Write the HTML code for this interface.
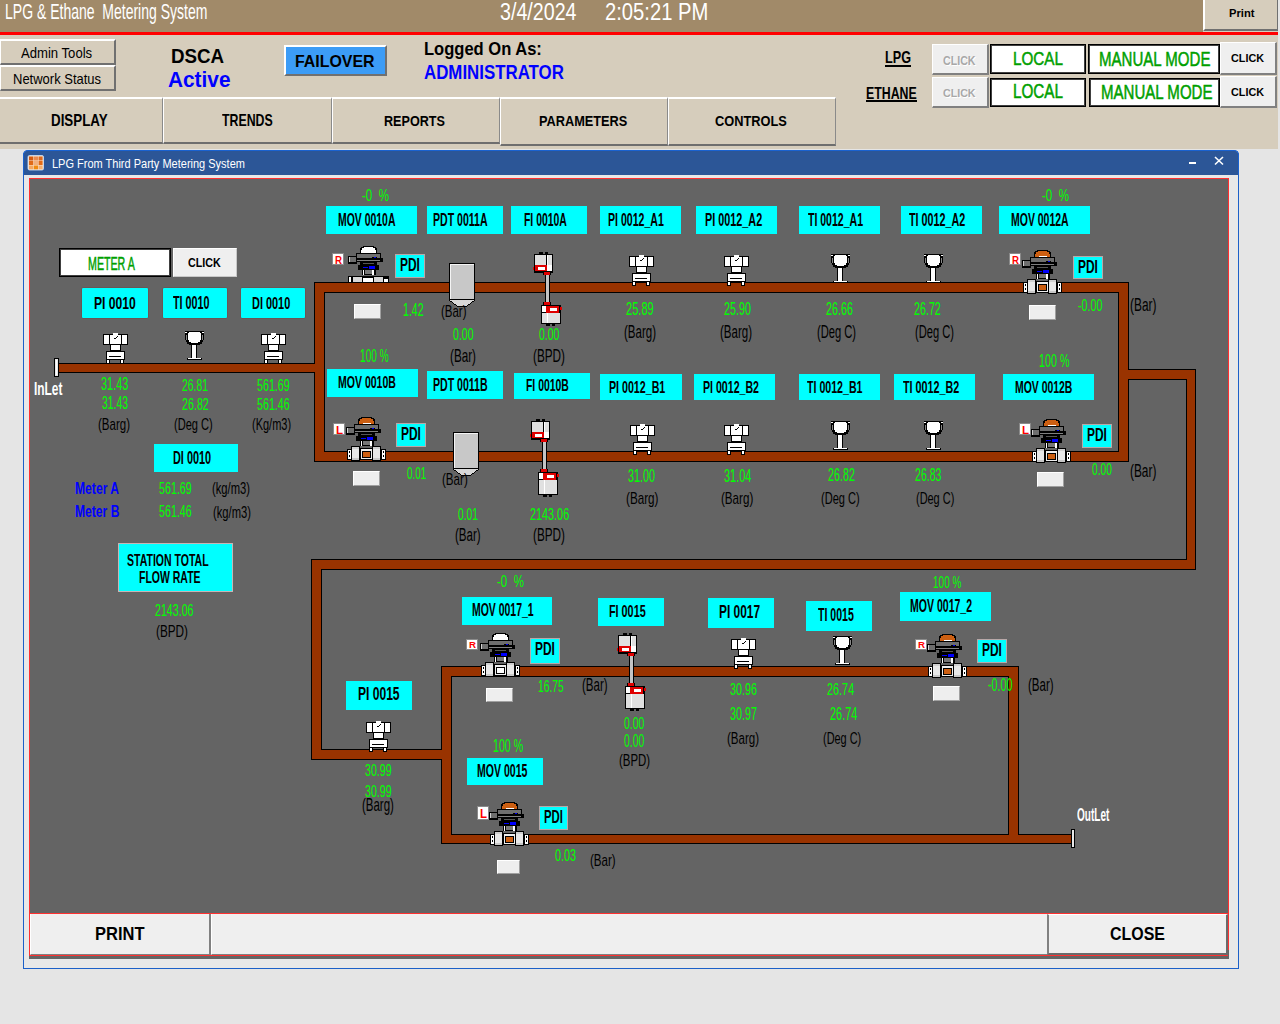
<!DOCTYPE html><html><head><meta charset="utf-8"><style>
html,body{margin:0;padding:0;}
body{width:1280px;height:1024px;position:relative;overflow:hidden;background:#e5e5e5;font-family:"Liberation Sans",sans-serif;}
.b{position:absolute;box-sizing:border-box;}
.t{position:absolute;white-space:pre;line-height:1;transform-origin:0 0;}
svg{position:absolute;left:0;top:0;}
</style></head><body>
<div class="b" style="left:0px;top:0px;width:1278px;height:149px;background:#d6cdbc"></div>
<div class="b" style="left:1278px;top:0px;width:2px;height:149px;background:#e5e5e5"></div>
<div class="b" style="left:0px;top:0px;width:1203px;height:32px;background:#a18a69"></div>
<div class="b" style="left:0px;top:32px;width:1278px;height:3px;background:#ff0000"></div>
<div class="b" style="left:1203px;top:0px;width:75px;height:31px;background:#d6cdbc;border-left:2px solid #fff;border-bottom:2px solid #707070;border-right:1px solid #707070"></div>
<div class="b" style="left:0px;top:39px;width:116px;height:26px;background:#d6cdbc;border-top:2px solid #fff;border-left:1px solid #fff;border-bottom:2px solid #707070;border-right:2px solid #707070"></div>
<div class="b" style="left:0px;top:65px;width:116px;height:26px;background:#d6cdbc;border-top:2px solid #fff;border-left:1px solid #fff;border-bottom:2px solid #707070;border-right:2px solid #707070"></div>
<div class="b" style="left:284px;top:45px;width:103px;height:31px;background:#3c9cf6;border-top:2px solid #fff;border-left:2px solid #fff;border-bottom:2px solid #707070;border-right:2px solid #707070"></div>
<div class="b" style="left:932px;top:44px;width:57px;height:31px;background:#efefef;border-top:1px solid #fff;border-left:1px solid #fff;border-bottom:2px solid #808080;border-right:2px solid #808080"></div>
<div class="b" style="left:932px;top:77px;width:57px;height:31px;background:#efefef;border-top:1px solid #fff;border-left:1px solid #fff;border-bottom:2px solid #808080;border-right:2px solid #808080"></div>
<div class="b" style="left:990px;top:44px;width:96px;height:30px;background:#fff;border:1px solid #000;box-shadow:inset 0 0 0 1px #404040"></div>
<div class="b" style="left:990px;top:78px;width:96px;height:29px;background:#fff;border:1px solid #000;box-shadow:inset 0 0 0 1px #404040"></div>
<div class="b" style="left:1088px;top:44px;width:132px;height:30px;background:#fff;border:1px solid #000;box-shadow:inset 0 0 0 1px #404040"></div>
<div class="b" style="left:1089px;top:78px;width:131px;height:29px;background:#fff;border:1px solid #000;box-shadow:inset 0 0 0 1px #404040"></div>
<div class="b" style="left:1220px;top:42px;width:57px;height:33px;background:#efefef;border-top:1px solid #fff;border-left:1px solid #fff;border-bottom:2px solid #808080;border-right:2px solid #808080"></div>
<div class="b" style="left:1220px;top:76px;width:57px;height:32px;background:#efefef;border-top:1px solid #fff;border-left:1px solid #fff;border-bottom:2px solid #808080;border-right:2px solid #808080"></div>
<div class="b" style="left:-1px;top:97px;width:164px;height:47px;background:#d6cdbc;border-top:2px solid #fff;border-left:1px solid #fff;border-bottom:2px solid #6e6e6e;border-right:1px solid #8a8a8a"></div>
<div class="b" style="left:163px;top:97px;width:169px;height:47px;background:#d6cdbc;border-top:2px solid #fff;border-left:1px solid #fff;border-bottom:2px solid #6e6e6e;border-right:1px solid #8a8a8a"></div>
<div class="b" style="left:332px;top:97px;width:168px;height:47px;background:#d6cdbc;border-top:2px solid #fff;border-left:1px solid #fff;border-bottom:2px solid #6e6e6e;border-right:1px solid #8a8a8a"></div>
<div class="b" style="left:500px;top:97px;width:168px;height:49px;background:#d6cdbc;border-top:2px solid #fff;border-left:1px solid #fff;border-bottom:2px solid #6e6e6e;border-right:1px solid #8a8a8a"></div>
<div class="b" style="left:668px;top:97px;width:168px;height:49px;background:#d6cdbc;border-top:2px solid #fff;border-left:1px solid #fff;border-bottom:2px solid #6e6e6e;border-right:1px solid #8a8a8a"></div>
<div class="b" style="left:23px;top:150px;width:1216px;height:819px;background:#e8e8e8;border:1px solid #1c60c8;border-top:none;border-radius:5px 5px 0 0;"></div>
<div class="b" style="left:23px;top:150px;width:1216px;height:25px;background:#2c5697;border-radius:5px 5px 0 0;border-top:1px solid #1a62d0;border-left:1px solid #1a62d0;border-right:1px solid #1a62d0"></div>
<div class="b" style="left:29px;top:178px;width:1200px;height:736px;background:#646464;border:1px solid #ff3030"></div>
<div class="b" style="left:29px;top:913px;width:1200px;height:43px;background:#efefef;border:1px solid #ff3030;border-top:1px solid #ff3030"></div>
<div class="b" style="left:29px;top:956px;width:1200px;height:3px;background:#646464"></div>
<div class="b" style="left:1228px;top:950px;width:1px;height:6px;background:#646464"></div>
<div class="b" style="left:30px;top:914px;width:181px;height:41px;background:#efefef;border-right:2px solid #808080;border-left:1px solid #fff;border-bottom:1px solid #808080"></div>
<div class="b" style="left:211px;top:914px;width:837px;height:41px;background:#efefef;border-left:1px solid #fff;border-bottom:1px solid #808080"></div>
<div class="b" style="left:1047px;top:914px;width:181px;height:41px;background:#efefef;border-left:2px solid #808080;border-right:2px solid #6a6a6a;border-bottom:2px solid #6a6a6a;border-top:1px solid #fff"></div>
<div class="b" style="left:59px;top:248px;width:112px;height:29px;background:#fff;border:1px solid #000;box-shadow:inset 0 0 0 1px #404040"></div>
<div class="b" style="left:173px;top:248px;width:64px;height:29px;background:#efefef;border-top:1px solid #fff;border-left:1px solid #fff;border-bottom:1px solid #c8c8c8;border-right:1px solid #c8c8c8"></div>
<div class="b" style="left:81px;top:287px;width:68px;height:32px;background:#00ffff;border:1px solid #6a5656;border-radius:2px"></div>
<div class="b" style="left:162px;top:287px;width:66px;height:32px;background:#00ffff;border:1px solid #6a5656;border-radius:2px"></div>
<div class="b" style="left:240px;top:287px;width:66px;height:32px;background:#00ffff;border:1px solid #6a5656;border-radius:2px"></div>
<div class="b" style="left:154px;top:444px;width:84px;height:28px;background:#00ffff"></div>
<div class="b" style="left:118px;top:543px;width:115px;height:49px;background:#00ffff;border:1px solid #c8b4b4"></div>
<div class="b" style="left:326px;top:206px;width:91px;height:28px;background:#00ffff"></div>
<div class="b" style="left:427px;top:206px;width:76px;height:28px;background:#00ffff"></div>
<div class="b" style="left:511px;top:206px;width:76px;height:28px;background:#00ffff"></div>
<div class="b" style="left:600px;top:206px;width:81px;height:28px;background:#00ffff"></div>
<div class="b" style="left:696px;top:206px;width:81px;height:28px;background:#00ffff"></div>
<div class="b" style="left:799px;top:206px;width:81px;height:28px;background:#00ffff"></div>
<div class="b" style="left:901px;top:206px;width:81px;height:28px;background:#00ffff"></div>
<div class="b" style="left:999px;top:206px;width:91px;height:28px;background:#00ffff"></div>
<div class="b" style="left:327px;top:369px;width:91px;height:28px;background:#00ffff"></div>
<div class="b" style="left:427px;top:371px;width:76px;height:28px;background:#00ffff"></div>
<div class="b" style="left:514px;top:373px;width:76px;height:26px;background:#00ffff"></div>
<div class="b" style="left:600px;top:374px;width:82px;height:26px;background:#00ffff"></div>
<div class="b" style="left:694px;top:374px;width:81px;height:26px;background:#00ffff"></div>
<div class="b" style="left:799px;top:374px;width:81px;height:26px;background:#00ffff"></div>
<div class="b" style="left:894px;top:374px;width:81px;height:26px;background:#00ffff"></div>
<div class="b" style="left:1003px;top:374px;width:91px;height:26px;background:#00ffff"></div>
<div class="b" style="left:462px;top:597px;width:90px;height:28px;background:#00ffff"></div>
<div class="b" style="left:598px;top:598px;width:66px;height:28px;background:#00ffff"></div>
<div class="b" style="left:708px;top:598px;width:66px;height:30px;background:#00ffff"></div>
<div class="b" style="left:806px;top:601px;width:66px;height:30px;background:#00ffff"></div>
<div class="b" style="left:900px;top:592px;width:91px;height:29px;background:#00ffff"></div>
<div class="b" style="left:346px;top:681px;width:66px;height:29px;background:#00ffff"></div>
<div class="b" style="left:467px;top:758px;width:76px;height:27px;background:#00ffff"></div>
<div class="b" style="left:395px;top:254px;width:30px;height:24px;background:#00ffff;border:1px solid #b8a8a8"></div>
<div class="b" style="left:396px;top:423px;width:30px;height:24px;background:#00ffff;border:1px solid #b8a8a8"></div>
<div class="b" style="left:1073px;top:256px;width:30px;height:23px;background:#00ffff;border:1px solid #b8a8a8"></div>
<div class="b" style="left:1082px;top:424px;width:30px;height:24px;background:#00ffff;border:1px solid #b8a8a8"></div>
<div class="b" style="left:530px;top:638px;width:30px;height:26px;background:#00ffff;border:1px solid #b8a8a8"></div>
<div class="b" style="left:977px;top:639px;width:30px;height:24px;background:#00ffff;border:1px solid #b8a8a8"></div>
<div class="b" style="left:539px;top:806px;width:29px;height:24px;background:#00ffff;border:1px solid #b8a8a8"></div>
<div class="b" style="left:354px;top:304px;width:27px;height:15px;background:#eeeeee;border-top:1px solid #fff;border-left:1px solid #fff;border-bottom:1px solid #a0a0a0;border-right:1px solid #a0a0a0"></div>
<div class="b" style="left:353px;top:471px;width:27px;height:15px;background:#eeeeee;border-top:1px solid #fff;border-left:1px solid #fff;border-bottom:1px solid #a0a0a0;border-right:1px solid #a0a0a0"></div>
<div class="b" style="left:1029px;top:305px;width:27px;height:15px;background:#eeeeee;border-top:1px solid #fff;border-left:1px solid #fff;border-bottom:1px solid #a0a0a0;border-right:1px solid #a0a0a0"></div>
<div class="b" style="left:1037px;top:472px;width:27px;height:15px;background:#eeeeee;border-top:1px solid #fff;border-left:1px solid #fff;border-bottom:1px solid #a0a0a0;border-right:1px solid #a0a0a0"></div>
<div class="b" style="left:486px;top:688px;width:27px;height:14px;background:#eeeeee;border-top:1px solid #fff;border-left:1px solid #fff;border-bottom:1px solid #a0a0a0;border-right:1px solid #a0a0a0"></div>
<div class="b" style="left:933px;top:686px;width:27px;height:15px;background:#eeeeee;border-top:1px solid #fff;border-left:1px solid #fff;border-bottom:1px solid #a0a0a0;border-right:1px solid #a0a0a0"></div>
<div class="b" style="left:497px;top:860px;width:23px;height:14px;background:#eeeeee;border-top:1px solid #fff;border-left:1px solid #fff;border-bottom:1px solid #a0a0a0;border-right:1px solid #a0a0a0"></div>
<div class="b" style="left:332px;top:253px;width:12px;height:12px;background:#fff;border:1px solid #8a8a8a"></div>
<div class="b" style="left:333px;top:423px;width:12px;height:12px;background:#fff;border:1px solid #8a8a8a"></div>
<div class="b" style="left:1009px;top:253px;width:12px;height:12px;background:#fff;border:1px solid #8a8a8a"></div>
<div class="b" style="left:1019px;top:423px;width:12px;height:12px;background:#fff;border:1px solid #8a8a8a"></div>
<div class="b" style="left:466px;top:639px;width:12px;height:11px;background:#fff;border:1px solid #8a8a8a"></div>
<div class="b" style="left:915px;top:639px;width:12px;height:11px;background:#fff;border:1px solid #8a8a8a"></div>
<div class="b" style="left:477px;top:806px;width:12px;height:14px;background:#fff;border:1px solid #8a8a8a"></div>
<svg width="1280" height="1024" viewBox="0 0 1280 1024" shape-rendering="crispEdges">
<rect x="363" y="246" width="11" height="1" fill="#000"/><rect x="361" y="247" width="15" height="1" fill="#000"/><rect x="360" y="248" width="17" height="6" fill="#000"/><rect x="364" y="247" width="9" height="1" fill="#ffffff"/><rect x="362" y="248" width="13" height="2" fill="#ffffff"/><rect x="361" y="250" width="15" height="3" fill="#ffffff"/><rect x="365" y="252" width="8" height="1" fill="#fff"/><rect x="348" y="256" width="9" height="8" fill="#000"/><rect x="350" y="257" width="6" height="5" fill="#6e6e6e"/><rect x="349" y="257" width="1" height="5" fill="#d0d0d0"/><rect x="356" y="253" width="25" height="9" fill="#000"/><rect x="357" y="254" width="23" height="4" fill="#6e6e6e"/><rect x="357" y="260" width="23" height="1" fill="#808080"/><rect x="372" y="257" width="5" height="2" fill="#000"/><rect x="374" y="257" width="2" height="1" fill="#0000ff"/><rect x="381" y="258" width="2" height="4" fill="#000"/><rect x="360" y="262" width="17" height="3" fill="#000"/><rect x="363" y="263" width="11" height="1" fill="#555"/><rect x="358" y="265" width="21" height="5" fill="#000"/><rect x="369" y="266" width="6" height="3" fill="#0000ff"/><rect x="363" y="267" width="5" height="1" fill="#0000ff"/><rect x="362" y="270" width="14" height="5" fill="#000"/><rect x="363" y="270" width="1" height="5" fill="#fff"/><rect x="372" y="270" width="2" height="5" fill="#fff"/><rect x="365" y="270" width="7" height="4" fill="#777"/>
<rect x="348" y="276" width="41" height="6" fill="#000"/><rect x="353" y="277" width="9" height="5" fill="#d8d8d8"/><rect x="374" y="277" width="9" height="5" fill="#d8d8d8"/><rect x="363" y="278" width="10" height="4" fill="#fff"/><rect x="349" y="277" width="2" height="5" fill="#fff"/><rect x="384" y="279" width="4" height="3" fill="#fff"/>
<rect x="314" y="282" width="815" height="11" fill="#000"/>
<rect x="314" y="282" width="11" height="180" fill="#000"/>
<rect x="314" y="451" width="815" height="11" fill="#000"/>
<rect x="1118" y="282" width="11" height="180" fill="#000"/>
<rect x="55" y="363" width="270" height="10" fill="#000"/>
<rect x="1118" y="369" width="78" height="11" fill="#000"/>
<rect x="1186" y="369" width="10" height="201" fill="#000"/>
<rect x="311" y="559" width="885" height="11" fill="#000"/>
<rect x="311" y="559" width="11" height="201" fill="#000"/>
<rect x="311" y="749" width="141" height="11" fill="#000"/>
<rect x="441" y="666" width="11" height="178" fill="#000"/>
<rect x="441" y="666" width="578" height="11" fill="#000"/>
<rect x="1008" y="666" width="11" height="178" fill="#000"/>
<rect x="441" y="834" width="631" height="10" fill="#000"/>
<rect x="315" y="283" width="813" height="9" fill="#993300"/>
<rect x="315" y="283" width="9" height="178" fill="#993300"/>
<rect x="315" y="452" width="813" height="9" fill="#993300"/>
<rect x="1119" y="283" width="9" height="178" fill="#993300"/>
<rect x="56" y="364" width="268" height="8" fill="#993300"/>
<rect x="1119" y="370" width="76" height="9" fill="#993300"/>
<rect x="1187" y="370" width="8" height="199" fill="#993300"/>
<rect x="312" y="560" width="883" height="9" fill="#993300"/>
<rect x="312" y="560" width="9" height="199" fill="#993300"/>
<rect x="312" y="750" width="139" height="9" fill="#993300"/>
<rect x="442" y="667" width="9" height="176" fill="#993300"/>
<rect x="442" y="667" width="576" height="9" fill="#993300"/>
<rect x="1009" y="667" width="9" height="176" fill="#993300"/>
<rect x="442" y="835" width="629" height="8" fill="#993300"/>
<rect x="54" y="358" width="5" height="19" fill="#000"/><rect x="55" y="359" width="3" height="17" fill="#e8e8e8"/><rect x="56" y="360" width="1" height="15" fill="#fff"/>
<rect x="1071" y="829" width="4" height="19" fill="#000"/><rect x="1072" y="830" width="2" height="17" fill="#e8e8e8"/>
<rect x="103" y="334" width="25" height="11" fill="#000"/><rect x="104" y="335" width="5" height="9" fill="#fff"/><rect x="110" y="335" width="11" height="9" fill="#fff"/><rect x="122" y="335" width="5" height="9" fill="#fff"/><rect x="113" y="333" width="5" height="2" fill="#fff"/><rect x="114" y="338" width="2" height="1" fill="#000"/><rect x="116" y="337" width="1" height="1" fill="#000"/><rect x="117" y="336" width="1" height="1" fill="#000"/><rect x="110" y="345" width="11" height="6" fill="#000"/><rect x="111" y="345" width="9" height="5" fill="#fff"/><rect x="106" y="351" width="19" height="9" fill="#000"/><rect x="107" y="352" width="17" height="7" fill="#fff"/><rect x="109" y="356" width="12" height="1" fill="#000"/><rect x="106" y="360" width="4" height="4" fill="#000"/><rect x="107" y="360" width="2" height="3" fill="#fff"/><rect x="120" y="360" width="4" height="4" fill="#000"/><rect x="121" y="360" width="2" height="3" fill="#fff"/>
<rect x="261" y="334" width="25" height="11" fill="#000"/><rect x="262" y="335" width="5" height="9" fill="#fff"/><rect x="268" y="335" width="11" height="9" fill="#fff"/><rect x="280" y="335" width="5" height="9" fill="#fff"/><rect x="271" y="333" width="5" height="2" fill="#fff"/><rect x="272" y="338" width="2" height="1" fill="#000"/><rect x="274" y="337" width="1" height="1" fill="#000"/><rect x="275" y="336" width="1" height="1" fill="#000"/><rect x="268" y="345" width="11" height="6" fill="#000"/><rect x="269" y="345" width="9" height="5" fill="#fff"/><rect x="264" y="351" width="19" height="9" fill="#000"/><rect x="265" y="352" width="17" height="7" fill="#fff"/><rect x="267" y="356" width="12" height="1" fill="#000"/><rect x="264" y="360" width="4" height="4" fill="#000"/><rect x="265" y="360" width="2" height="3" fill="#fff"/><rect x="278" y="360" width="4" height="4" fill="#000"/><rect x="279" y="360" width="2" height="3" fill="#fff"/>
<rect x="629" y="256" width="25" height="11" fill="#000"/><rect x="630" y="257" width="5" height="9" fill="#fff"/><rect x="636" y="257" width="11" height="9" fill="#fff"/><rect x="648" y="257" width="5" height="9" fill="#fff"/><rect x="639" y="255" width="5" height="2" fill="#fff"/><rect x="640" y="260" width="2" height="1" fill="#000"/><rect x="642" y="259" width="1" height="1" fill="#000"/><rect x="643" y="258" width="1" height="1" fill="#000"/><rect x="636" y="267" width="11" height="6" fill="#000"/><rect x="637" y="267" width="9" height="5" fill="#fff"/><rect x="632" y="273" width="19" height="9" fill="#000"/><rect x="633" y="274" width="17" height="7" fill="#fff"/><rect x="635" y="278" width="12" height="1" fill="#000"/><rect x="632" y="282" width="4" height="4" fill="#000"/><rect x="633" y="282" width="2" height="3" fill="#fff"/><rect x="646" y="282" width="4" height="4" fill="#000"/><rect x="647" y="282" width="2" height="3" fill="#fff"/>
<rect x="724" y="256" width="25" height="11" fill="#000"/><rect x="725" y="257" width="5" height="9" fill="#fff"/><rect x="731" y="257" width="11" height="9" fill="#fff"/><rect x="743" y="257" width="5" height="9" fill="#fff"/><rect x="734" y="255" width="5" height="2" fill="#fff"/><rect x="735" y="260" width="2" height="1" fill="#000"/><rect x="737" y="259" width="1" height="1" fill="#000"/><rect x="738" y="258" width="1" height="1" fill="#000"/><rect x="731" y="267" width="11" height="6" fill="#000"/><rect x="732" y="267" width="9" height="5" fill="#fff"/><rect x="727" y="273" width="19" height="9" fill="#000"/><rect x="728" y="274" width="17" height="7" fill="#fff"/><rect x="730" y="278" width="12" height="1" fill="#000"/><rect x="727" y="282" width="4" height="4" fill="#000"/><rect x="728" y="282" width="2" height="3" fill="#fff"/><rect x="741" y="282" width="4" height="4" fill="#000"/><rect x="742" y="282" width="2" height="3" fill="#fff"/>
<rect x="630" y="425" width="25" height="11" fill="#000"/><rect x="631" y="426" width="5" height="9" fill="#fff"/><rect x="637" y="426" width="11" height="9" fill="#fff"/><rect x="649" y="426" width="5" height="9" fill="#fff"/><rect x="640" y="424" width="5" height="2" fill="#fff"/><rect x="641" y="429" width="2" height="1" fill="#000"/><rect x="643" y="428" width="1" height="1" fill="#000"/><rect x="644" y="427" width="1" height="1" fill="#000"/><rect x="637" y="436" width="11" height="6" fill="#000"/><rect x="638" y="436" width="9" height="5" fill="#fff"/><rect x="633" y="442" width="19" height="9" fill="#000"/><rect x="634" y="443" width="17" height="7" fill="#fff"/><rect x="636" y="447" width="12" height="1" fill="#000"/><rect x="633" y="451" width="4" height="4" fill="#000"/><rect x="634" y="451" width="2" height="3" fill="#fff"/><rect x="647" y="451" width="4" height="4" fill="#000"/><rect x="648" y="451" width="2" height="3" fill="#fff"/>
<rect x="724" y="425" width="25" height="11" fill="#000"/><rect x="725" y="426" width="5" height="9" fill="#fff"/><rect x="731" y="426" width="11" height="9" fill="#fff"/><rect x="743" y="426" width="5" height="9" fill="#fff"/><rect x="734" y="424" width="5" height="2" fill="#fff"/><rect x="735" y="429" width="2" height="1" fill="#000"/><rect x="737" y="428" width="1" height="1" fill="#000"/><rect x="738" y="427" width="1" height="1" fill="#000"/><rect x="731" y="436" width="11" height="6" fill="#000"/><rect x="732" y="436" width="9" height="5" fill="#fff"/><rect x="727" y="442" width="19" height="9" fill="#000"/><rect x="728" y="443" width="17" height="7" fill="#fff"/><rect x="730" y="447" width="12" height="1" fill="#000"/><rect x="727" y="451" width="4" height="4" fill="#000"/><rect x="728" y="451" width="2" height="3" fill="#fff"/><rect x="741" y="451" width="4" height="4" fill="#000"/><rect x="742" y="451" width="2" height="3" fill="#fff"/>
<rect x="731" y="639" width="25" height="11" fill="#000"/><rect x="732" y="640" width="5" height="9" fill="#fff"/><rect x="738" y="640" width="11" height="9" fill="#fff"/><rect x="750" y="640" width="5" height="9" fill="#fff"/><rect x="741" y="638" width="5" height="2" fill="#fff"/><rect x="742" y="643" width="2" height="1" fill="#000"/><rect x="744" y="642" width="1" height="1" fill="#000"/><rect x="745" y="641" width="1" height="1" fill="#000"/><rect x="738" y="650" width="11" height="6" fill="#000"/><rect x="739" y="650" width="9" height="5" fill="#fff"/><rect x="734" y="656" width="19" height="9" fill="#000"/><rect x="735" y="657" width="17" height="7" fill="#fff"/><rect x="737" y="661" width="12" height="1" fill="#000"/><rect x="734" y="665" width="4" height="4" fill="#000"/><rect x="735" y="665" width="2" height="3" fill="#fff"/><rect x="748" y="665" width="4" height="4" fill="#000"/><rect x="749" y="665" width="2" height="3" fill="#fff"/>
<rect x="366" y="722" width="25" height="11" fill="#000"/><rect x="367" y="723" width="5" height="9" fill="#fff"/><rect x="373" y="723" width="11" height="9" fill="#fff"/><rect x="385" y="723" width="5" height="9" fill="#fff"/><rect x="376" y="721" width="5" height="2" fill="#fff"/><rect x="377" y="726" width="2" height="1" fill="#000"/><rect x="379" y="725" width="1" height="1" fill="#000"/><rect x="380" y="724" width="1" height="1" fill="#000"/><rect x="373" y="733" width="11" height="6" fill="#000"/><rect x="374" y="733" width="9" height="5" fill="#fff"/><rect x="369" y="739" width="19" height="9" fill="#000"/><rect x="370" y="740" width="17" height="7" fill="#fff"/><rect x="372" y="744" width="12" height="1" fill="#000"/><rect x="369" y="748" width="4" height="4" fill="#000"/><rect x="370" y="748" width="2" height="3" fill="#fff"/><rect x="383" y="748" width="4" height="4" fill="#000"/><rect x="384" y="748" width="2" height="3" fill="#fff"/>
<rect x="185" y="331" width="19" height="9" fill="#000"/><rect x="186" y="340" width="17" height="2" fill="#000"/><rect x="187" y="342" width="15" height="2" fill="#000"/><rect x="189" y="344" width="11" height="1" fill="#000"/><rect x="188" y="333" width="13" height="7" fill="#fff"/><rect x="189" y="332" width="11" height="1" fill="#fff"/><rect x="189" y="340" width="11" height="2" fill="#fff"/><rect x="191" y="342" width="7" height="1" fill="#fff"/><rect x="185" y="332" width="2" height="1" fill="#fff"/><rect x="202" y="332" width="2" height="1" fill="#fff"/><rect x="186" y="335" width="1" height="5" fill="#888"/><rect x="202" y="335" width="1" height="5" fill="#888"/><rect x="191" y="345" width="6" height="14" fill="#000"/><rect x="192" y="345" width="4" height="13" fill="#fff"/><rect x="187" y="358" width="15" height="2" fill="#000"/><rect x="188" y="358" width="13" height="1" fill="#fff"/>
<rect x="831" y="254" width="19" height="9" fill="#000"/><rect x="832" y="263" width="17" height="2" fill="#000"/><rect x="833" y="265" width="15" height="2" fill="#000"/><rect x="835" y="267" width="11" height="1" fill="#000"/><rect x="834" y="256" width="13" height="7" fill="#fff"/><rect x="835" y="255" width="11" height="1" fill="#fff"/><rect x="835" y="263" width="11" height="2" fill="#fff"/><rect x="837" y="265" width="7" height="1" fill="#fff"/><rect x="831" y="255" width="2" height="1" fill="#fff"/><rect x="848" y="255" width="2" height="1" fill="#fff"/><rect x="832" y="258" width="1" height="5" fill="#888"/><rect x="848" y="258" width="1" height="5" fill="#888"/><rect x="837" y="268" width="6" height="14" fill="#000"/><rect x="838" y="268" width="4" height="13" fill="#fff"/><rect x="833" y="281" width="15" height="2" fill="#000"/><rect x="834" y="281" width="13" height="1" fill="#fff"/>
<rect x="924" y="254" width="19" height="9" fill="#000"/><rect x="925" y="263" width="17" height="2" fill="#000"/><rect x="926" y="265" width="15" height="2" fill="#000"/><rect x="928" y="267" width="11" height="1" fill="#000"/><rect x="927" y="256" width="13" height="7" fill="#fff"/><rect x="928" y="255" width="11" height="1" fill="#fff"/><rect x="928" y="263" width="11" height="2" fill="#fff"/><rect x="930" y="265" width="7" height="1" fill="#fff"/><rect x="924" y="255" width="2" height="1" fill="#fff"/><rect x="941" y="255" width="2" height="1" fill="#fff"/><rect x="925" y="258" width="1" height="5" fill="#888"/><rect x="941" y="258" width="1" height="5" fill="#888"/><rect x="930" y="268" width="6" height="14" fill="#000"/><rect x="931" y="268" width="4" height="13" fill="#fff"/><rect x="926" y="281" width="15" height="2" fill="#000"/><rect x="927" y="281" width="13" height="1" fill="#fff"/>
<rect x="831" y="421" width="19" height="9" fill="#000"/><rect x="832" y="430" width="17" height="2" fill="#000"/><rect x="833" y="432" width="15" height="2" fill="#000"/><rect x="835" y="434" width="11" height="1" fill="#000"/><rect x="834" y="423" width="13" height="7" fill="#fff"/><rect x="835" y="422" width="11" height="1" fill="#fff"/><rect x="835" y="430" width="11" height="2" fill="#fff"/><rect x="837" y="432" width="7" height="1" fill="#fff"/><rect x="831" y="422" width="2" height="1" fill="#fff"/><rect x="848" y="422" width="2" height="1" fill="#fff"/><rect x="832" y="425" width="1" height="5" fill="#888"/><rect x="848" y="425" width="1" height="5" fill="#888"/><rect x="837" y="435" width="6" height="14" fill="#000"/><rect x="838" y="435" width="4" height="13" fill="#fff"/><rect x="833" y="448" width="15" height="2" fill="#000"/><rect x="834" y="448" width="13" height="1" fill="#fff"/>
<rect x="924" y="421" width="19" height="9" fill="#000"/><rect x="925" y="430" width="17" height="2" fill="#000"/><rect x="926" y="432" width="15" height="2" fill="#000"/><rect x="928" y="434" width="11" height="1" fill="#000"/><rect x="927" y="423" width="13" height="7" fill="#fff"/><rect x="928" y="422" width="11" height="1" fill="#fff"/><rect x="928" y="430" width="11" height="2" fill="#fff"/><rect x="930" y="432" width="7" height="1" fill="#fff"/><rect x="924" y="422" width="2" height="1" fill="#fff"/><rect x="941" y="422" width="2" height="1" fill="#fff"/><rect x="925" y="425" width="1" height="5" fill="#888"/><rect x="941" y="425" width="1" height="5" fill="#888"/><rect x="930" y="435" width="6" height="14" fill="#000"/><rect x="931" y="435" width="4" height="13" fill="#fff"/><rect x="926" y="448" width="15" height="2" fill="#000"/><rect x="927" y="448" width="13" height="1" fill="#fff"/>
<rect x="833" y="636" width="19" height="9" fill="#000"/><rect x="834" y="645" width="17" height="2" fill="#000"/><rect x="835" y="647" width="15" height="2" fill="#000"/><rect x="837" y="649" width="11" height="1" fill="#000"/><rect x="836" y="638" width="13" height="7" fill="#fff"/><rect x="837" y="637" width="11" height="1" fill="#fff"/><rect x="837" y="645" width="11" height="2" fill="#fff"/><rect x="839" y="647" width="7" height="1" fill="#fff"/><rect x="833" y="637" width="2" height="1" fill="#fff"/><rect x="850" y="637" width="2" height="1" fill="#fff"/><rect x="834" y="640" width="1" height="5" fill="#888"/><rect x="850" y="640" width="1" height="5" fill="#888"/><rect x="839" y="650" width="6" height="14" fill="#000"/><rect x="840" y="650" width="4" height="13" fill="#fff"/><rect x="835" y="663" width="15" height="2" fill="#000"/><rect x="836" y="663" width="13" height="1" fill="#fff"/>
<rect x="539" y="252" width="4" height="2" fill="#000"/><rect x="545" y="252" width="3" height="2" fill="#000"/><rect x="534" y="254" width="19" height="19" fill="#000"/><rect x="535" y="255" width="17" height="10" fill="#e0e0e0"/><rect x="546" y="255" width="1" height="10" fill="#000"/><rect x="547" y="255" width="1" height="10" fill="#fff"/><rect x="535" y="265" width="12" height="6" fill="#e00000"/><rect x="538" y="267" width="7" height="3" fill="#fff"/><rect x="547" y="265" width="5" height="6" fill="#fff"/><rect x="533" y="267" width="1" height="3" fill="#e00000"/><rect x="543" y="272" width="8" height="3" fill="#000"/><rect x="544" y="272" width="6" height="3" fill="#e00000"/><rect x="545" y="275" width="5" height="28" fill="#000"/><rect x="546" y="275" width="3" height="28" fill="#c4c4c4"/><rect x="543" y="302" width="8" height="3" fill="#000"/><rect x="544" y="302" width="6" height="3" fill="#e00000"/><rect x="541" y="305" width="20" height="19" fill="#000"/><rect x="542" y="306" width="4" height="6" fill="#fff"/><rect x="546" y="306" width="13" height="7" fill="#e00000"/><rect x="550" y="308" width="7" height="3" fill="#fff"/><rect x="560" y="307" width="2" height="3" fill="#e00000"/><rect x="542" y="313" width="18" height="10" fill="#e0e0e0"/><rect x="547" y="313" width="1" height="10" fill="#fff"/><rect x="546" y="324" width="4" height="2" fill="#000"/><rect x="552" y="324" width="3" height="2" fill="#000"/>
<rect x="536" y="419" width="4" height="2" fill="#000"/><rect x="542" y="419" width="3" height="2" fill="#000"/><rect x="531" y="421" width="19" height="19" fill="#000"/><rect x="532" y="422" width="17" height="10" fill="#e0e0e0"/><rect x="543" y="422" width="1" height="10" fill="#000"/><rect x="544" y="422" width="1" height="10" fill="#fff"/><rect x="532" y="432" width="12" height="6" fill="#e00000"/><rect x="535" y="434" width="7" height="3" fill="#fff"/><rect x="544" y="432" width="5" height="6" fill="#fff"/><rect x="530" y="434" width="1" height="3" fill="#e00000"/><rect x="540" y="439" width="8" height="3" fill="#000"/><rect x="541" y="439" width="6" height="3" fill="#e00000"/><rect x="542" y="442" width="5" height="28" fill="#000"/><rect x="543" y="442" width="3" height="28" fill="#c4c4c4"/><rect x="540" y="469" width="8" height="3" fill="#000"/><rect x="541" y="469" width="6" height="3" fill="#e00000"/><rect x="538" y="472" width="20" height="23" fill="#000"/><rect x="539" y="473" width="4" height="6" fill="#fff"/><rect x="543" y="473" width="13" height="7" fill="#e00000"/><rect x="547" y="475" width="7" height="3" fill="#fff"/><rect x="557" y="474" width="2" height="3" fill="#e00000"/><rect x="539" y="480" width="18" height="14" fill="#e0e0e0"/><rect x="544" y="480" width="1" height="14" fill="#fff"/><rect x="543" y="495" width="4" height="2" fill="#000"/><rect x="549" y="495" width="3" height="2" fill="#000"/>
<rect x="623" y="633" width="4" height="2" fill="#000"/><rect x="629" y="633" width="3" height="2" fill="#000"/><rect x="618" y="635" width="19" height="19" fill="#000"/><rect x="619" y="636" width="17" height="10" fill="#e0e0e0"/><rect x="630" y="636" width="1" height="10" fill="#000"/><rect x="631" y="636" width="1" height="10" fill="#fff"/><rect x="619" y="646" width="12" height="6" fill="#e00000"/><rect x="622" y="648" width="7" height="3" fill="#fff"/><rect x="631" y="646" width="5" height="6" fill="#fff"/><rect x="617" y="648" width="1" height="3" fill="#e00000"/><rect x="627" y="653" width="8" height="3" fill="#000"/><rect x="628" y="653" width="6" height="3" fill="#e00000"/><rect x="629" y="656" width="5" height="28" fill="#000"/><rect x="630" y="656" width="3" height="28" fill="#c4c4c4"/><rect x="627" y="683" width="8" height="3" fill="#000"/><rect x="628" y="683" width="6" height="3" fill="#e00000"/><rect x="625" y="686" width="20" height="23" fill="#000"/><rect x="626" y="687" width="4" height="6" fill="#fff"/><rect x="630" y="687" width="13" height="7" fill="#e00000"/><rect x="634" y="689" width="7" height="3" fill="#fff"/><rect x="644" y="688" width="2" height="3" fill="#e00000"/><rect x="626" y="694" width="18" height="14" fill="#e0e0e0"/><rect x="631" y="694" width="1" height="14" fill="#fff"/><rect x="630" y="709" width="4" height="2" fill="#000"/><rect x="636" y="709" width="3" height="2" fill="#000"/>
<rect x="449" y="263" width="26" height="37" fill="#000"/><rect x="450" y="264" width="24" height="35" fill="#c8c8c8"/><rect x="450" y="264" width="24" height="1" fill="#f4f4f4"/><rect x="450" y="264" width="1" height="35" fill="#f4f4f4"/><rect x="449" y="300" width="26" height="1" fill="#000"/><rect x="450" y="300" width="24" height="1" fill="#d8d8d8"/><rect x="450" y="301" width="24" height="1" fill="#000"/><rect x="452" y="301" width="20" height="1" fill="#d8d8d8"/><rect x="452" y="302" width="20" height="1" fill="#000"/><rect x="453" y="302" width="18" height="1" fill="#d8d8d8"/><rect x="453" y="303" width="18" height="1" fill="#000"/><rect x="454" y="303" width="16" height="1" fill="#d8d8d8"/><rect x="454" y="304" width="16" height="1" fill="#000"/><rect x="456" y="304" width="12" height="1" fill="#d8d8d8"/><rect x="456" y="305" width="12" height="1" fill="#000"/><rect x="457" y="305" width="10" height="1" fill="#d8d8d8"/><rect x="457" y="306" width="10" height="1" fill="#000"/>
<rect x="453" y="432" width="26" height="37" fill="#000"/><rect x="454" y="433" width="24" height="35" fill="#c8c8c8"/><rect x="454" y="433" width="24" height="1" fill="#f4f4f4"/><rect x="454" y="433" width="1" height="35" fill="#f4f4f4"/><rect x="453" y="469" width="26" height="1" fill="#000"/><rect x="454" y="469" width="24" height="1" fill="#d8d8d8"/><rect x="454" y="470" width="24" height="1" fill="#000"/><rect x="456" y="470" width="20" height="1" fill="#d8d8d8"/><rect x="456" y="471" width="20" height="1" fill="#000"/><rect x="457" y="471" width="18" height="1" fill="#d8d8d8"/><rect x="457" y="472" width="18" height="1" fill="#000"/><rect x="458" y="472" width="16" height="1" fill="#d8d8d8"/><rect x="458" y="473" width="16" height="1" fill="#000"/><rect x="460" y="473" width="12" height="1" fill="#d8d8d8"/><rect x="460" y="474" width="12" height="1" fill="#000"/><rect x="461" y="474" width="10" height="1" fill="#d8d8d8"/><rect x="461" y="475" width="10" height="1" fill="#000"/>
<rect x="347" y="449" width="5" height="11" fill="#000"/><rect x="348" y="450" width="3" height="9" fill="#fff"/><rect x="349" y="451" width="1" height="2" fill="#000"/><rect x="349" y="455" width="1" height="2" fill="#000"/><rect x="381" y="449" width="5" height="11" fill="#000"/><rect x="382" y="450" width="3" height="9" fill="#fff"/><rect x="383" y="451" width="1" height="2" fill="#000"/><rect x="383" y="455" width="1" height="2" fill="#000"/><rect x="360" y="448" width="13" height="12" fill="#000"/><rect x="361" y="449" width="11" height="10" fill="#efefef"/><rect x="351" y="446" width="9" height="15" fill="#000"/><rect x="352" y="447" width="7" height="13" fill="#e8e8e8"/><rect x="352" y="447" width="7" height="2" fill="#d0d0d0"/><rect x="352" y="458" width="7" height="2" fill="#c8c8c8"/><rect x="372" y="446" width="9" height="15" fill="#000"/><rect x="373" y="447" width="7" height="13" fill="#e8e8e8"/><rect x="373" y="447" width="7" height="2" fill="#d0d0d0"/><rect x="373" y="458" width="7" height="2" fill="#c8c8c8"/><rect x="362" y="451" width="9" height="7" fill="#000"/><rect x="363" y="452" width="7" height="5" fill="#cc5f12"/>
<rect x="361" y="417" width="11" height="1" fill="#000"/><rect x="359" y="418" width="15" height="1" fill="#000"/><rect x="358" y="419" width="17" height="6" fill="#000"/><rect x="362" y="418" width="9" height="1" fill="#cc5f12"/><rect x="360" y="419" width="13" height="2" fill="#cc5f12"/><rect x="359" y="421" width="15" height="3" fill="#cc5f12"/><rect x="363" y="423" width="8" height="1" fill="#fff"/><rect x="346" y="427" width="9" height="8" fill="#000"/><rect x="348" y="428" width="6" height="5" fill="#6e6e6e"/><rect x="347" y="428" width="1" height="5" fill="#d0d0d0"/><rect x="354" y="424" width="25" height="9" fill="#000"/><rect x="355" y="425" width="23" height="4" fill="#6e6e6e"/><rect x="355" y="431" width="23" height="1" fill="#808080"/><rect x="370" y="428" width="5" height="2" fill="#000"/><rect x="372" y="428" width="2" height="1" fill="#0000ff"/><rect x="379" y="429" width="2" height="4" fill="#000"/><rect x="358" y="433" width="17" height="3" fill="#000"/><rect x="361" y="434" width="11" height="1" fill="#555"/><rect x="356" y="436" width="21" height="5" fill="#000"/><rect x="367" y="437" width="6" height="3" fill="#0000ff"/><rect x="361" y="438" width="5" height="1" fill="#0000ff"/><rect x="360" y="441" width="14" height="5" fill="#000"/><rect x="361" y="441" width="1" height="5" fill="#fff"/><rect x="370" y="441" width="2" height="5" fill="#fff"/><rect x="363" y="441" width="7" height="4" fill="#777"/>
<rect x="1023" y="282" width="5" height="11" fill="#000"/><rect x="1024" y="283" width="3" height="9" fill="#fff"/><rect x="1025" y="284" width="1" height="2" fill="#000"/><rect x="1025" y="288" width="1" height="2" fill="#000"/><rect x="1057" y="282" width="5" height="11" fill="#000"/><rect x="1058" y="283" width="3" height="9" fill="#fff"/><rect x="1059" y="284" width="1" height="2" fill="#000"/><rect x="1059" y="288" width="1" height="2" fill="#000"/><rect x="1036" y="281" width="13" height="12" fill="#000"/><rect x="1037" y="282" width="11" height="10" fill="#efefef"/><rect x="1027" y="279" width="9" height="15" fill="#000"/><rect x="1028" y="280" width="7" height="13" fill="#e8e8e8"/><rect x="1028" y="280" width="7" height="2" fill="#d0d0d0"/><rect x="1028" y="291" width="7" height="2" fill="#c8c8c8"/><rect x="1048" y="279" width="9" height="15" fill="#000"/><rect x="1049" y="280" width="7" height="13" fill="#e8e8e8"/><rect x="1049" y="280" width="7" height="2" fill="#d0d0d0"/><rect x="1049" y="291" width="7" height="2" fill="#c8c8c8"/><rect x="1038" y="284" width="9" height="7" fill="#000"/><rect x="1039" y="285" width="7" height="5" fill="#cc5f12"/>
<rect x="1037" y="250" width="11" height="1" fill="#000"/><rect x="1035" y="251" width="15" height="1" fill="#000"/><rect x="1034" y="252" width="17" height="6" fill="#000"/><rect x="1038" y="251" width="9" height="1" fill="#cc5f12"/><rect x="1036" y="252" width="13" height="2" fill="#cc5f12"/><rect x="1035" y="254" width="15" height="3" fill="#cc5f12"/><rect x="1039" y="256" width="8" height="1" fill="#fff"/><rect x="1022" y="260" width="9" height="8" fill="#000"/><rect x="1024" y="261" width="6" height="5" fill="#6e6e6e"/><rect x="1023" y="261" width="1" height="5" fill="#d0d0d0"/><rect x="1030" y="257" width="25" height="9" fill="#000"/><rect x="1031" y="258" width="23" height="4" fill="#6e6e6e"/><rect x="1031" y="264" width="23" height="1" fill="#808080"/><rect x="1046" y="261" width="5" height="2" fill="#000"/><rect x="1048" y="261" width="2" height="1" fill="#0000ff"/><rect x="1055" y="262" width="2" height="4" fill="#000"/><rect x="1034" y="266" width="17" height="3" fill="#000"/><rect x="1037" y="267" width="11" height="1" fill="#555"/><rect x="1032" y="269" width="21" height="5" fill="#000"/><rect x="1043" y="270" width="6" height="3" fill="#0000ff"/><rect x="1037" y="271" width="5" height="1" fill="#0000ff"/><rect x="1036" y="274" width="14" height="5" fill="#000"/><rect x="1037" y="274" width="1" height="5" fill="#fff"/><rect x="1046" y="274" width="2" height="5" fill="#fff"/><rect x="1039" y="274" width="7" height="4" fill="#777"/>
<rect x="1032" y="451" width="5" height="11" fill="#000"/><rect x="1033" y="452" width="3" height="9" fill="#fff"/><rect x="1034" y="453" width="1" height="2" fill="#000"/><rect x="1034" y="457" width="1" height="2" fill="#000"/><rect x="1066" y="451" width="5" height="11" fill="#000"/><rect x="1067" y="452" width="3" height="9" fill="#fff"/><rect x="1068" y="453" width="1" height="2" fill="#000"/><rect x="1068" y="457" width="1" height="2" fill="#000"/><rect x="1045" y="450" width="13" height="12" fill="#000"/><rect x="1046" y="451" width="11" height="10" fill="#efefef"/><rect x="1036" y="448" width="9" height="15" fill="#000"/><rect x="1037" y="449" width="7" height="13" fill="#e8e8e8"/><rect x="1037" y="449" width="7" height="2" fill="#d0d0d0"/><rect x="1037" y="460" width="7" height="2" fill="#c8c8c8"/><rect x="1057" y="448" width="9" height="15" fill="#000"/><rect x="1058" y="449" width="7" height="13" fill="#e8e8e8"/><rect x="1058" y="449" width="7" height="2" fill="#d0d0d0"/><rect x="1058" y="460" width="7" height="2" fill="#c8c8c8"/><rect x="1047" y="453" width="9" height="7" fill="#000"/><rect x="1048" y="454" width="7" height="5" fill="#cc5f12"/>
<rect x="1046" y="419" width="11" height="1" fill="#000"/><rect x="1044" y="420" width="15" height="1" fill="#000"/><rect x="1043" y="421" width="17" height="6" fill="#000"/><rect x="1047" y="420" width="9" height="1" fill="#cc5f12"/><rect x="1045" y="421" width="13" height="2" fill="#cc5f12"/><rect x="1044" y="423" width="15" height="3" fill="#cc5f12"/><rect x="1048" y="425" width="8" height="1" fill="#fff"/><rect x="1031" y="429" width="9" height="8" fill="#000"/><rect x="1033" y="430" width="6" height="5" fill="#6e6e6e"/><rect x="1032" y="430" width="1" height="5" fill="#d0d0d0"/><rect x="1039" y="426" width="25" height="9" fill="#000"/><rect x="1040" y="427" width="23" height="4" fill="#6e6e6e"/><rect x="1040" y="433" width="23" height="1" fill="#808080"/><rect x="1055" y="430" width="5" height="2" fill="#000"/><rect x="1057" y="430" width="2" height="1" fill="#0000ff"/><rect x="1064" y="431" width="2" height="4" fill="#000"/><rect x="1043" y="435" width="17" height="3" fill="#000"/><rect x="1046" y="436" width="11" height="1" fill="#555"/><rect x="1041" y="438" width="21" height="5" fill="#000"/><rect x="1052" y="439" width="6" height="3" fill="#0000ff"/><rect x="1046" y="440" width="5" height="1" fill="#0000ff"/><rect x="1045" y="443" width="14" height="5" fill="#000"/><rect x="1046" y="443" width="1" height="5" fill="#fff"/><rect x="1055" y="443" width="2" height="5" fill="#fff"/><rect x="1048" y="443" width="7" height="4" fill="#777"/>
<rect x="481" y="665" width="5" height="11" fill="#000"/><rect x="482" y="666" width="3" height="9" fill="#fff"/><rect x="483" y="667" width="1" height="2" fill="#000"/><rect x="483" y="671" width="1" height="2" fill="#000"/><rect x="515" y="665" width="5" height="11" fill="#000"/><rect x="516" y="666" width="3" height="9" fill="#fff"/><rect x="517" y="667" width="1" height="2" fill="#000"/><rect x="517" y="671" width="1" height="2" fill="#000"/><rect x="494" y="664" width="13" height="12" fill="#000"/><rect x="495" y="665" width="11" height="10" fill="#efefef"/><rect x="485" y="662" width="9" height="15" fill="#000"/><rect x="486" y="663" width="7" height="13" fill="#e8e8e8"/><rect x="486" y="663" width="7" height="2" fill="#d0d0d0"/><rect x="486" y="674" width="7" height="2" fill="#c8c8c8"/><rect x="506" y="662" width="9" height="15" fill="#000"/><rect x="507" y="663" width="7" height="13" fill="#e8e8e8"/><rect x="507" y="663" width="7" height="2" fill="#d0d0d0"/><rect x="507" y="674" width="7" height="2" fill="#c8c8c8"/><rect x="496" y="667" width="9" height="7" fill="#000"/><rect x="497" y="668" width="7" height="5" fill="#fff"/>
<rect x="495" y="633" width="11" height="1" fill="#000"/><rect x="493" y="634" width="15" height="1" fill="#000"/><rect x="492" y="635" width="17" height="6" fill="#000"/><rect x="496" y="634" width="9" height="1" fill="#fff"/><rect x="494" y="635" width="13" height="2" fill="#fff"/><rect x="493" y="637" width="15" height="3" fill="#fff"/><rect x="497" y="639" width="8" height="1" fill="#fff"/><rect x="480" y="643" width="9" height="8" fill="#000"/><rect x="482" y="644" width="6" height="5" fill="#6e6e6e"/><rect x="481" y="644" width="1" height="5" fill="#d0d0d0"/><rect x="488" y="640" width="25" height="9" fill="#000"/><rect x="489" y="641" width="23" height="4" fill="#6e6e6e"/><rect x="489" y="647" width="23" height="1" fill="#808080"/><rect x="504" y="644" width="5" height="2" fill="#000"/><rect x="506" y="644" width="2" height="1" fill="#0000ff"/><rect x="513" y="645" width="2" height="4" fill="#000"/><rect x="492" y="649" width="17" height="3" fill="#000"/><rect x="495" y="650" width="11" height="1" fill="#555"/><rect x="490" y="652" width="21" height="5" fill="#000"/><rect x="501" y="653" width="6" height="3" fill="#0000ff"/><rect x="495" y="654" width="5" height="1" fill="#0000ff"/><rect x="494" y="657" width="14" height="5" fill="#000"/><rect x="495" y="657" width="1" height="5" fill="#fff"/><rect x="504" y="657" width="2" height="5" fill="#fff"/><rect x="497" y="657" width="7" height="4" fill="#777"/>
<rect x="928" y="666" width="5" height="11" fill="#000"/><rect x="929" y="667" width="3" height="9" fill="#fff"/><rect x="930" y="668" width="1" height="2" fill="#000"/><rect x="930" y="672" width="1" height="2" fill="#000"/><rect x="962" y="666" width="5" height="11" fill="#000"/><rect x="963" y="667" width="3" height="9" fill="#fff"/><rect x="964" y="668" width="1" height="2" fill="#000"/><rect x="964" y="672" width="1" height="2" fill="#000"/><rect x="941" y="665" width="13" height="12" fill="#000"/><rect x="942" y="666" width="11" height="10" fill="#efefef"/><rect x="932" y="663" width="9" height="15" fill="#000"/><rect x="933" y="664" width="7" height="13" fill="#e8e8e8"/><rect x="933" y="664" width="7" height="2" fill="#d0d0d0"/><rect x="933" y="675" width="7" height="2" fill="#c8c8c8"/><rect x="953" y="663" width="9" height="15" fill="#000"/><rect x="954" y="664" width="7" height="13" fill="#e8e8e8"/><rect x="954" y="664" width="7" height="2" fill="#d0d0d0"/><rect x="954" y="675" width="7" height="2" fill="#c8c8c8"/><rect x="943" y="668" width="9" height="7" fill="#000"/><rect x="944" y="669" width="7" height="5" fill="#cc5f12"/>
<rect x="942" y="634" width="11" height="1" fill="#000"/><rect x="940" y="635" width="15" height="1" fill="#000"/><rect x="939" y="636" width="17" height="6" fill="#000"/><rect x="943" y="635" width="9" height="1" fill="#cc5f12"/><rect x="941" y="636" width="13" height="2" fill="#cc5f12"/><rect x="940" y="638" width="15" height="3" fill="#cc5f12"/><rect x="944" y="640" width="8" height="1" fill="#fff"/><rect x="927" y="644" width="9" height="8" fill="#000"/><rect x="929" y="645" width="6" height="5" fill="#6e6e6e"/><rect x="928" y="645" width="1" height="5" fill="#d0d0d0"/><rect x="935" y="641" width="25" height="9" fill="#000"/><rect x="936" y="642" width="23" height="4" fill="#6e6e6e"/><rect x="936" y="648" width="23" height="1" fill="#808080"/><rect x="951" y="645" width="5" height="2" fill="#000"/><rect x="953" y="645" width="2" height="1" fill="#0000ff"/><rect x="960" y="646" width="2" height="4" fill="#000"/><rect x="939" y="650" width="17" height="3" fill="#000"/><rect x="942" y="651" width="11" height="1" fill="#555"/><rect x="937" y="653" width="21" height="5" fill="#000"/><rect x="948" y="654" width="6" height="3" fill="#0000ff"/><rect x="942" y="655" width="5" height="1" fill="#0000ff"/><rect x="941" y="658" width="14" height="5" fill="#000"/><rect x="942" y="658" width="1" height="5" fill="#fff"/><rect x="951" y="658" width="2" height="5" fill="#fff"/><rect x="944" y="658" width="7" height="4" fill="#777"/>
<rect x="490" y="834" width="5" height="11" fill="#000"/><rect x="491" y="835" width="3" height="9" fill="#fff"/><rect x="492" y="836" width="1" height="2" fill="#000"/><rect x="492" y="840" width="1" height="2" fill="#000"/><rect x="524" y="834" width="5" height="11" fill="#000"/><rect x="525" y="835" width="3" height="9" fill="#fff"/><rect x="526" y="836" width="1" height="2" fill="#000"/><rect x="526" y="840" width="1" height="2" fill="#000"/><rect x="503" y="833" width="13" height="12" fill="#000"/><rect x="504" y="834" width="11" height="10" fill="#efefef"/><rect x="494" y="831" width="9" height="15" fill="#000"/><rect x="495" y="832" width="7" height="13" fill="#e8e8e8"/><rect x="495" y="832" width="7" height="2" fill="#d0d0d0"/><rect x="495" y="843" width="7" height="2" fill="#c8c8c8"/><rect x="515" y="831" width="9" height="15" fill="#000"/><rect x="516" y="832" width="7" height="13" fill="#e8e8e8"/><rect x="516" y="832" width="7" height="2" fill="#d0d0d0"/><rect x="516" y="843" width="7" height="2" fill="#c8c8c8"/><rect x="505" y="836" width="9" height="7" fill="#000"/><rect x="506" y="837" width="7" height="5" fill="#cc5f12"/>
<rect x="504" y="802" width="11" height="1" fill="#000"/><rect x="502" y="803" width="15" height="1" fill="#000"/><rect x="501" y="804" width="17" height="6" fill="#000"/><rect x="505" y="803" width="9" height="1" fill="#cc5f12"/><rect x="503" y="804" width="13" height="2" fill="#cc5f12"/><rect x="502" y="806" width="15" height="3" fill="#cc5f12"/><rect x="506" y="808" width="8" height="1" fill="#fff"/><rect x="489" y="812" width="9" height="8" fill="#000"/><rect x="491" y="813" width="6" height="5" fill="#6e6e6e"/><rect x="490" y="813" width="1" height="5" fill="#d0d0d0"/><rect x="497" y="809" width="25" height="9" fill="#000"/><rect x="498" y="810" width="23" height="4" fill="#6e6e6e"/><rect x="498" y="816" width="23" height="1" fill="#808080"/><rect x="513" y="813" width="5" height="2" fill="#000"/><rect x="515" y="813" width="2" height="1" fill="#0000ff"/><rect x="522" y="814" width="2" height="4" fill="#000"/><rect x="501" y="818" width="17" height="3" fill="#000"/><rect x="504" y="819" width="11" height="1" fill="#555"/><rect x="499" y="821" width="21" height="5" fill="#000"/><rect x="510" y="822" width="6" height="3" fill="#0000ff"/><rect x="504" y="823" width="5" height="1" fill="#0000ff"/><rect x="503" y="826" width="14" height="5" fill="#000"/><rect x="504" y="826" width="1" height="5" fill="#fff"/><rect x="513" y="826" width="2" height="5" fill="#fff"/><rect x="506" y="826" width="7" height="4" fill="#777"/>
</svg>
<div class="t" style="left:4.50px;top:1.21px;font-size:22.46px;transform:scaleX(0.6237);color:#ffffff;">LPG &amp; Ethane  Metering System</div>
<div class="t" style="left:500.40px;top:0.43px;font-size:24.20px;transform:scaleX(0.8131);color:#ffffff;">3/4/2024</div>
<div class="t" style="left:605.00px;top:0.43px;font-size:24.20px;transform:scaleX(0.8360);color:#ffffff;">2:05:21 PM</div>
<div class="t" style="left:1228.50px;top:7.12px;font-size:11.74px;transform:scaleX(0.9538);color:#000000;font-weight:bold;">Print</div>
<div class="t" style="left:21.25px;top:46.05px;font-size:14.06px;transform:scaleX(0.9334);color:#000000;">Admin Tools</div>
<div class="t" style="left:13.10px;top:71.93px;font-size:14.20px;transform:scaleX(0.9154);color:#000000;">Network Status</div>
<div class="t" style="left:170.60px;top:45.55px;font-size:20.29px;transform:scaleX(0.9248);color:#000000;font-weight:bold;">DSCA</div>
<div class="t" style="left:167.50px;top:70.38px;font-size:21.38px;transform:scaleX(0.9738);color:#0000ff;font-weight:bold;">Active</div>
<div class="t" style="left:294.50px;top:52.94px;font-size:16.30px;transform:scaleX(0.9777);color:#000000;font-weight:bold;">FAILOVER</div>
<div class="t" style="left:424.00px;top:39.73px;font-size:18.55px;transform:scaleX(0.8921);color:#000000;font-weight:bold;">Logged On As:</div>
<div class="t" style="left:424.00px;top:62.95px;font-size:19.71px;transform:scaleX(0.8563);color:#0000ff;font-weight:bold;">ADMINISTRATOR</div>
<div class="t" style="left:885.00px;top:49.40px;font-size:16.23px;transform:scaleX(0.7795);color:#000000;font-weight:bold;">LPG</div>
<div class="t" style="left:866.00px;top:85.50px;font-size:15.65px;transform:scaleX(0.7892);color:#000000;font-weight:bold;">ETHANE</div>
<div class="b" style="left:885px;top:65px;width:26px;height:2px;background:#000"></div>
<div class="b" style="left:866px;top:100px;width:51px;height:2px;background:#000"></div>
<div class="t" style="left:943.40px;top:54.75px;font-size:12.17px;transform:scaleX(0.8765);color:#a8a8a8;font-weight:bold;text-shadow:1px 1px 0 #fff;">CLICK</div>
<div class="t" style="left:943.40px;top:88.04px;font-size:11.59px;transform:scaleX(0.9204);color:#a8a8a8;font-weight:bold;text-shadow:1px 1px 0 #fff;">CLICK</div>
<div class="t" style="left:1012.50px;top:49.32px;font-size:19.28px;transform:scaleX(0.7908);color:#00a000;-webkit-text-stroke:0.5px #00a000;">LOCAL</div>
<div class="t" style="left:1012.50px;top:82.42px;font-size:19.86px;transform:scaleX(0.7678);color:#00a000;-webkit-text-stroke:0.5px #00a000;">LOCAL</div>
<div class="t" style="left:1098.75px;top:48.68px;font-size:20.14px;transform:scaleX(0.7475);color:#00a000;-webkit-text-stroke:0.5px #00a000;">MANUAL MODE</div>
<div class="t" style="left:1100.90px;top:82.77px;font-size:19.57px;transform:scaleX(0.7693);color:#00a000;-webkit-text-stroke:0.5px #00a000;">MANUAL MODE</div>
<div class="t" style="left:1231.00px;top:52.97px;font-size:11.45px;transform:scaleX(0.9435);color:#000000;font-weight:bold;">CLICK</div>
<div class="t" style="left:1231.00px;top:87.07px;font-size:11.45px;transform:scaleX(0.9435);color:#000000;font-weight:bold;">CLICK</div>
<div class="t" style="left:50.90px;top:112.90px;font-size:15.65px;transform:scaleX(0.8539);color:#000000;font-weight:bold;">DISPLAY</div>
<div class="t" style="left:221.50px;top:112.90px;font-size:15.65px;transform:scaleX(0.7892);color:#000000;font-weight:bold;">TRENDS</div>
<div class="t" style="left:384.40px;top:113.07px;font-size:15.22px;transform:scaleX(0.8277);color:#000000;font-weight:bold;">REPORTS</div>
<div class="t" style="left:539.30px;top:114.46px;font-size:14.64px;transform:scaleX(0.8718);color:#000000;font-weight:bold;">PARAMETERS</div>
<div class="t" style="left:715.10px;top:114.23px;font-size:14.78px;transform:scaleX(0.8670);color:#000000;font-weight:bold;">CONTROLS</div>
<div class="t" style="left:52.00px;top:158.89px;font-size:11.96px;transform:scaleX(0.9202);color:#ffffff;">LPG From Third Party Metering System</div>
<svg width="1280" height="1024" style="position:absolute;left:0;top:0"><rect x="28" y="155.5" width="15.5" height="14.5" rx="1.5" fill="#fbe3cc" stroke="#cfe0f4" stroke-width="0.8"/><rect x="29" y="156.5" width="4.3" height="4" fill="#d45a10"/><rect x="33.8" y="156.5" width="4.3" height="4" fill="#e88a50"/><rect x="38.6" y="156.5" width="4" height="4" fill="#dc6a20"/><rect x="29" y="161" width="4.3" height="4" fill="#e06a18"/><rect x="33.8" y="161" width="4.3" height="4" fill="#f0b080"/><rect x="38.6" y="161" width="4" height="4" fill="#e06a18"/><rect x="29" y="165.5" width="4.3" height="3.8" fill="#f5a860"/><rect x="33.8" y="165.5" width="4.3" height="3.8" fill="#f08a10"/><rect x="38.6" y="165.5" width="4" height="3.8" fill="#f5b070"/></svg>
<div class="b" style="left:1189px;top:162px;width:7px;height:2px;background:#fff"></div>
<svg width="1280" height="1024" style="position:absolute;left:0;top:0"><path d="M1215,157 L1223,164.5 M1223,157 L1215,164.5" stroke="#fff" stroke-width="1.6"/></svg>
<div class="t" style="left:95.00px;top:925.40px;font-size:18.12px;transform:scaleX(0.9108);color:#000000;font-weight:bold;">PRINT</div>
<div class="t" style="left:1109.50px;top:925.40px;font-size:18.12px;transform:scaleX(0.8813);color:#000000;font-weight:bold;">CLOSE</div>
<div class="t" style="left:88.00px;top:255.20px;font-size:18.12px;transform:scaleX(0.5885);color:#00a000;-webkit-text-stroke:0.5px #00a000;">METER A</div>
<div class="t" style="left:188.20px;top:257.90px;font-size:11.88px;transform:scaleX(0.9034);color:#000000;font-weight:bold;">CLICK</div>
<div class="t" style="left:93.70px;top:294.54px;font-size:17.25px;transform:scaleX(0.7030);color:#000000;font-weight:bold;">PI 0010</div>
<div class="t" style="left:173.40px;top:295.12px;font-size:17.97px;transform:scaleX(0.6003);color:#000000;font-weight:bold;">TI 0010</div>
<div class="t" style="left:251.50px;top:294.54px;font-size:17.25px;transform:scaleX(0.6324);color:#000000;font-weight:bold;">DI 0010</div>
<div class="t" style="left:33.50px;top:379.79px;font-size:18.84px;transform:scaleX(0.6329);color:#ffffff;font-weight:bold;">InLet</div>
<div class="t" style="left:100.70px;top:375.20px;font-size:18.12px;transform:scaleX(0.6022);color:#00ff00;">31.43</div>
<div class="t" style="left:101.90px;top:395.32px;font-size:17.97px;transform:scaleX(0.5804);color:#00ff00;">31.43</div>
<div class="t" style="left:182.00px;top:376.80px;font-size:16.23px;transform:scaleX(0.6401);color:#00ff00;">26.81</div>
<div class="t" style="left:182.00px;top:396.75px;font-size:15.94px;transform:scaleX(0.6718);color:#00ff00;">26.82</div>
<div class="t" style="left:257.00px;top:376.80px;font-size:16.23px;transform:scaleX(0.6589);color:#00ff00;">561.69</div>
<div class="t" style="left:257.00px;top:396.75px;font-size:15.94px;transform:scaleX(0.6709);color:#00ff00;">561.46</div>
<div class="t" style="left:98.00px;top:416.51px;font-size:16.81px;transform:scaleX(0.6853);color:#000000;">(Barg)</div>
<div class="t" style="left:174.00px;top:416.51px;font-size:16.81px;transform:scaleX(0.6594);color:#000000;">(Deg C)</div>
<div class="t" style="left:251.50px;top:416.51px;font-size:16.81px;transform:scaleX(0.6542);color:#000000;">(Kg/m3)</div>
<div class="t" style="left:173.40px;top:449.52px;font-size:17.97px;transform:scaleX(0.6069);color:#000000;font-weight:bold;">DI 0010</div>
<div class="t" style="left:74.50px;top:480.79px;font-size:16.96px;transform:scaleX(0.7165);color:#0000ff;font-weight:bold;">Meter A</div>
<div class="t" style="left:75.00px;top:503.59px;font-size:16.96px;transform:scaleX(0.7156);color:#0000ff;font-weight:bold;">Meter B</div>
<div class="t" style="left:158.90px;top:480.79px;font-size:16.96px;transform:scaleX(0.6327);color:#00ff00;">561.69</div>
<div class="t" style="left:158.90px;top:503.59px;font-size:16.96px;transform:scaleX(0.6327);color:#00ff00;">561.46</div>
<div class="t" style="left:212.30px;top:481.16px;font-size:16.52px;transform:scaleX(0.6785);color:#000000;">(kg/m3)</div>
<div class="t" style="left:213.00px;top:504.20px;font-size:16.23px;transform:scaleX(0.6906);color:#000000;">(kg/m3)</div>
<div class="t" style="left:127.00px;top:551.76px;font-size:17.10px;transform:scaleX(0.6151);color:#000000;font-weight:bold;">STATION TOTAL</div>
<div class="t" style="left:139.00px;top:569.89px;font-size:16.96px;transform:scaleX(0.6189);color:#000000;font-weight:bold;">FLOW RATE</div>
<div class="t" style="left:155.40px;top:602.69px;font-size:16.96px;transform:scaleX(0.6297);color:#00ff00;">2143.06</div>
<div class="t" style="left:156.00px;top:622.68px;font-size:16.38px;transform:scaleX(0.7177);color:#000000;">(BPD)</div>
<div class="t" style="left:361.60px;top:187.51px;font-size:16.81px;transform:scaleX(0.6853);color:#00ff00;">-0  %</div>
<div class="t" style="left:338.00px;top:210.61px;font-size:18.70px;transform:scaleX(0.5589);color:#000000;font-weight:bold;">MOV 0010A</div>
<div class="t" style="left:433.00px;top:210.61px;font-size:18.70px;transform:scaleX(0.5649);color:#000000;font-weight:bold;">PDT 0011A</div>
<div class="t" style="left:523.70px;top:210.61px;font-size:18.70px;transform:scaleX(0.5580);color:#000000;font-weight:bold;">FI 0010A</div>
<div class="t" style="left:608.00px;top:210.61px;font-size:18.70px;transform:scaleX(0.5650);color:#000000;font-weight:bold;">PI 0012_A1</div>
<div class="t" style="left:704.80px;top:210.61px;font-size:18.70px;transform:scaleX(0.5792);color:#000000;font-weight:bold;">PI 0012_A2</div>
<div class="t" style="left:808.00px;top:210.61px;font-size:18.70px;transform:scaleX(0.5630);color:#000000;font-weight:bold;">TI 0012_A1</div>
<div class="t" style="left:908.70px;top:210.61px;font-size:18.70px;transform:scaleX(0.5763);color:#000000;font-weight:bold;">TI 0012_A2</div>
<div class="t" style="left:1011.00px;top:210.61px;font-size:18.70px;transform:scaleX(0.5609);color:#000000;font-weight:bold;">MOV 0012A</div>
<div class="t" style="left:1042.00px;top:187.51px;font-size:16.81px;transform:scaleX(0.6878);color:#00ff00;">-0  %</div>
<div class="t" style="left:403.30px;top:300.90px;font-size:18.12px;transform:scaleX(0.5867);color:#00ff00;">1.42</div>
<div class="t" style="left:441.00px;top:303.02px;font-size:17.39px;transform:scaleX(0.6597);color:#000000;">(Bar)</div>
<div class="t" style="left:453.00px;top:326.89px;font-size:16.96px;transform:scaleX(0.6238);color:#00ff00;">0.00</div>
<div class="t" style="left:450.00px;top:346.88px;font-size:18.26px;transform:scaleX(0.6406);color:#000000;">(Bar)</div>
<div class="t" style="left:539.20px;top:326.89px;font-size:16.96px;transform:scaleX(0.6178);color:#00ff00;">0.00</div>
<div class="t" style="left:533.00px;top:346.88px;font-size:18.26px;transform:scaleX(0.6437);color:#000000;">(BPD)</div>
<div class="t" style="left:359.70px;top:347.95px;font-size:17.83px;transform:scaleX(0.5699);color:#00ff00;">100 %</div>
<div class="t" style="left:626.00px;top:299.72px;font-size:18.62px;transform:scaleX(0.5944);color:#00ff00;">25.89</div>
<div class="t" style="left:723.60px;top:299.72px;font-size:18.62px;transform:scaleX(0.5772);color:#00ff00;">25.90</div>
<div class="t" style="left:825.50px;top:299.72px;font-size:18.62px;transform:scaleX(0.5793);color:#00ff00;">26.66</div>
<div class="t" style="left:914.00px;top:299.72px;font-size:18.62px;transform:scaleX(0.5751);color:#00ff00;">26.72</div>
<div class="t" style="left:624.00px;top:323.11px;font-size:18.70px;transform:scaleX(0.6162);color:#000000;">(Barg)</div>
<div class="t" style="left:720.00px;top:323.11px;font-size:18.70px;transform:scaleX(0.6162);color:#000000;">(Barg)</div>
<div class="t" style="left:816.90px;top:323.11px;font-size:18.70px;transform:scaleX(0.5975);color:#000000;">(Deg C)</div>
<div class="t" style="left:915.00px;top:323.11px;font-size:18.70px;transform:scaleX(0.5960);color:#000000;">(Deg C)</div>
<div class="t" style="left:1078.00px;top:298.09px;font-size:16.96px;transform:scaleX(0.6337);color:#00ff00;">-0.00</div>
<div class="t" style="left:1130.00px;top:297.25px;font-size:17.83px;transform:scaleX(0.6664);color:#000000;">(Bar)</div>
<div class="t" style="left:1038.70px;top:352.57px;font-size:17.68px;transform:scaleX(0.6085);color:#00ff00;">100 %</div>
<div class="t" style="left:338.00px;top:374.99px;font-size:16.96px;transform:scaleX(0.6216);color:#000000;font-weight:bold;">MOV 0010B</div>
<div class="t" style="left:433.00px;top:376.65px;font-size:17.83px;transform:scaleX(0.5924);color:#000000;font-weight:bold;">PDT 0011B</div>
<div class="t" style="left:525.60px;top:378.11px;font-size:16.81px;transform:scaleX(0.6205);color:#000000;font-weight:bold;">FI 0010B</div>
<div class="t" style="left:608.70px;top:379.06px;font-size:17.10px;transform:scaleX(0.6232);color:#000000;font-weight:bold;">PI 0012_B1</div>
<div class="t" style="left:703.00px;top:379.06px;font-size:17.10px;transform:scaleX(0.6199);color:#000000;font-weight:bold;">PI 0012_B2</div>
<div class="t" style="left:806.80px;top:379.06px;font-size:17.10px;transform:scaleX(0.6211);color:#000000;font-weight:bold;">TI 0012_B1</div>
<div class="t" style="left:902.80px;top:379.06px;font-size:17.10px;transform:scaleX(0.6290);color:#000000;font-weight:bold;">TI 0012_B2</div>
<div class="t" style="left:1015.30px;top:379.06px;font-size:17.10px;transform:scaleX(0.6100);color:#000000;font-weight:bold;">MOV 0012B</div>
<div class="t" style="left:407.30px;top:465.89px;font-size:16.96px;transform:scaleX(0.5875);color:#00ff00;">0.01</div>
<div class="t" style="left:442.40px;top:471.79px;font-size:16.96px;transform:scaleX(0.6846);color:#000000;">(Bar)</div>
<div class="t" style="left:458.00px;top:507.39px;font-size:16.96px;transform:scaleX(0.6056);color:#00ff00;">0.01</div>
<div class="t" style="left:455.30px;top:526.65px;font-size:17.83px;transform:scaleX(0.6487);color:#000000;">(Bar)</div>
<div class="t" style="left:529.80px;top:507.39px;font-size:16.96px;transform:scaleX(0.6395);color:#00ff00;">2143.06</div>
<div class="t" style="left:533.00px;top:526.65px;font-size:17.83px;transform:scaleX(0.6594);color:#000000;">(BPD)</div>
<div class="t" style="left:628.00px;top:467.95px;font-size:17.83px;transform:scaleX(0.6052);color:#00ff00;">31.00</div>
<div class="t" style="left:723.60px;top:467.95px;font-size:17.83px;transform:scaleX(0.6142);color:#00ff00;">31.04</div>
<div class="t" style="left:827.90px;top:466.92px;font-size:17.97px;transform:scaleX(0.5981);color:#00ff00;">26.82</div>
<div class="t" style="left:915.00px;top:466.92px;font-size:17.97px;transform:scaleX(0.5892);color:#00ff00;">26.83</div>
<div class="t" style="left:625.90px;top:490.51px;font-size:16.81px;transform:scaleX(0.6960);color:#000000;">(Barg)</div>
<div class="t" style="left:721.00px;top:490.51px;font-size:16.81px;transform:scaleX(0.6917);color:#000000;">(Barg)</div>
<div class="t" style="left:821.30px;top:490.51px;font-size:16.81px;transform:scaleX(0.6577);color:#000000;">(Deg C)</div>
<div class="t" style="left:915.70px;top:490.51px;font-size:16.81px;transform:scaleX(0.6509);color:#000000;">(Deg C)</div>
<div class="t" style="left:1091.50px;top:462.39px;font-size:16.96px;transform:scaleX(0.6026);color:#00ff00;">0.00</div>
<div class="t" style="left:1130.00px;top:462.97px;font-size:17.68px;transform:scaleX(0.6718);color:#000000;">(Bar)</div>
<div class="t" style="left:496.90px;top:573.89px;font-size:16.96px;transform:scaleX(0.6794);color:#00ff00;">-0  %</div>
<div class="t" style="left:471.50px;top:602.32px;font-size:17.97px;transform:scaleX(0.5827);color:#000000;font-weight:bold;">MOV 0017_1</div>
<div class="t" style="left:537.90px;top:678.06px;font-size:17.10px;transform:scaleX(0.6029);color:#00ff00;">16.75</div>
<div class="t" style="left:582.30px;top:677.47px;font-size:17.68px;transform:scaleX(0.6540);color:#000000;">(Bar)</div>
<div class="t" style="left:358.00px;top:686.27px;font-size:17.68px;transform:scaleX(0.6825);color:#000000;font-weight:bold;">PI 0015</div>
<div class="t" style="left:609.30px;top:603.79px;font-size:16.96px;transform:scaleX(0.6380);color:#000000;font-weight:bold;">FI 0015</div>
<div class="t" style="left:719.40px;top:604.37px;font-size:17.68px;transform:scaleX(0.6743);color:#000000;font-weight:bold;">PI 0017</div>
<div class="t" style="left:817.90px;top:607.17px;font-size:17.68px;transform:scaleX(0.5968);color:#000000;font-weight:bold;">TI 0015</div>
<div class="t" style="left:624.00px;top:715.18px;font-size:16.38px;transform:scaleX(0.6396);color:#00ff00;">0.00</div>
<div class="t" style="left:624.00px;top:733.27px;font-size:17.68px;transform:scaleX(0.5924);color:#00ff00;">0.00</div>
<div class="t" style="left:618.70px;top:752.06px;font-size:17.10px;transform:scaleX(0.6680);color:#000000;">(BPD)</div>
<div class="t" style="left:730.00px;top:681.06px;font-size:17.10px;transform:scaleX(0.6309);color:#00ff00;">30.96</div>
<div class="t" style="left:730.00px;top:705.57px;font-size:17.68px;transform:scaleX(0.6102);color:#00ff00;">30.97</div>
<div class="t" style="left:727.20px;top:729.56px;font-size:17.10px;transform:scaleX(0.6758);color:#000000;">(Barg)</div>
<div class="t" style="left:826.50px;top:681.06px;font-size:17.10px;transform:scaleX(0.6356);color:#00ff00;">26.74</div>
<div class="t" style="left:829.60px;top:705.57px;font-size:17.68px;transform:scaleX(0.6192);color:#00ff00;">26.74</div>
<div class="t" style="left:822.60px;top:729.56px;font-size:17.10px;transform:scaleX(0.6382);color:#000000;">(Deg C)</div>
<div class="t" style="left:932.70px;top:574.99px;font-size:16.96px;transform:scaleX(0.5929);color:#00ff00;">100 %</div>
<div class="t" style="left:910.40px;top:596.51px;font-size:18.70px;transform:scaleX(0.5637);color:#000000;font-weight:bold;">MOV 0017_2</div>
<div class="t" style="left:987.70px;top:677.47px;font-size:17.68px;transform:scaleX(0.6102);color:#00ff00;">-0.00</div>
<div class="t" style="left:1028.30px;top:677.47px;font-size:17.68px;transform:scaleX(0.6540);color:#000000;">(Bar)</div>
<div class="t" style="left:365.00px;top:761.82px;font-size:17.39px;transform:scaleX(0.6112);color:#00ff00;">30.99</div>
<div class="t" style="left:365.00px;top:783.02px;font-size:17.39px;transform:scaleX(0.6112);color:#00ff00;">30.99</div>
<div class="t" style="left:362.40px;top:794.72px;font-size:19.28px;transform:scaleX(0.5958);color:#000000;">(Barg)</div>
<div class="t" style="left:493.40px;top:736.81px;font-size:18.70px;transform:scaleX(0.5698);color:#00ff00;">100 %</div>
<div class="t" style="left:476.60px;top:761.63px;font-size:18.55px;transform:scaleX(0.5684);color:#000000;font-weight:bold;">MOV 0015</div>
<div class="t" style="left:555.00px;top:848.30px;font-size:15.65px;transform:scaleX(0.6955);color:#00ff00;">0.03</div>
<div class="t" style="left:590.30px;top:853.11px;font-size:16.81px;transform:scaleX(0.6878);color:#000000;">(Bar)</div>
<div class="t" style="left:1077.20px;top:807.49px;font-size:17.54px;transform:scaleX(0.5733);color:#ffffff;font-weight:bold;">OutLet</div>
<div class="t" style="left:400.30px;top:257.22px;font-size:17.97px;transform:scaleX(0.6641);color:#000000;font-weight:bold;">PDI</div>
<div class="t" style="left:401.30px;top:426.22px;font-size:17.97px;transform:scaleX(0.6641);color:#000000;font-weight:bold;">PDI</div>
<div class="t" style="left:1078.30px;top:259.22px;font-size:17.97px;transform:scaleX(0.6641);color:#000000;font-weight:bold;">PDI</div>
<div class="t" style="left:1087.30px;top:427.22px;font-size:17.97px;transform:scaleX(0.6641);color:#000000;font-weight:bold;">PDI</div>
<div class="t" style="left:535.30px;top:641.22px;font-size:17.97px;transform:scaleX(0.6641);color:#000000;font-weight:bold;">PDI</div>
<div class="t" style="left:982.30px;top:642.22px;font-size:17.97px;transform:scaleX(0.6641);color:#000000;font-weight:bold;">PDI</div>
<div class="t" style="left:544.30px;top:809.22px;font-size:17.97px;transform:scaleX(0.6307);color:#000000;font-weight:bold;">PDI</div>
<div class="t" style="left:334.50px;top:254.61px;font-size:10.58px;transform:scaleX(0.9158);color:#ff0000;font-weight:bold;">R</div>
<div class="t" style="left:335.50px;top:424.61px;font-size:10.58px;transform:scaleX(1.0847);color:#ff0000;font-weight:bold;">L</div>
<div class="t" style="left:1011.50px;top:254.61px;font-size:10.58px;transform:scaleX(0.9158);color:#ff0000;font-weight:bold;">R</div>
<div class="t" style="left:1021.50px;top:424.61px;font-size:10.58px;transform:scaleX(1.0847);color:#ff0000;font-weight:bold;">L</div>
<div class="t" style="left:468.50px;top:640.84px;font-size:9.13px;transform:scaleX(1.0611);color:#ff0000;font-weight:bold;">R</div>
<div class="t" style="left:917.50px;top:640.84px;font-size:9.13px;transform:scaleX(1.0611);color:#ff0000;font-weight:bold;">R</div>
<div class="t" style="left:479.50px;top:807.14px;font-size:13.48px;transform:scaleX(0.8514);color:#ff0000;font-weight:bold;">L</div>
</body></html>
